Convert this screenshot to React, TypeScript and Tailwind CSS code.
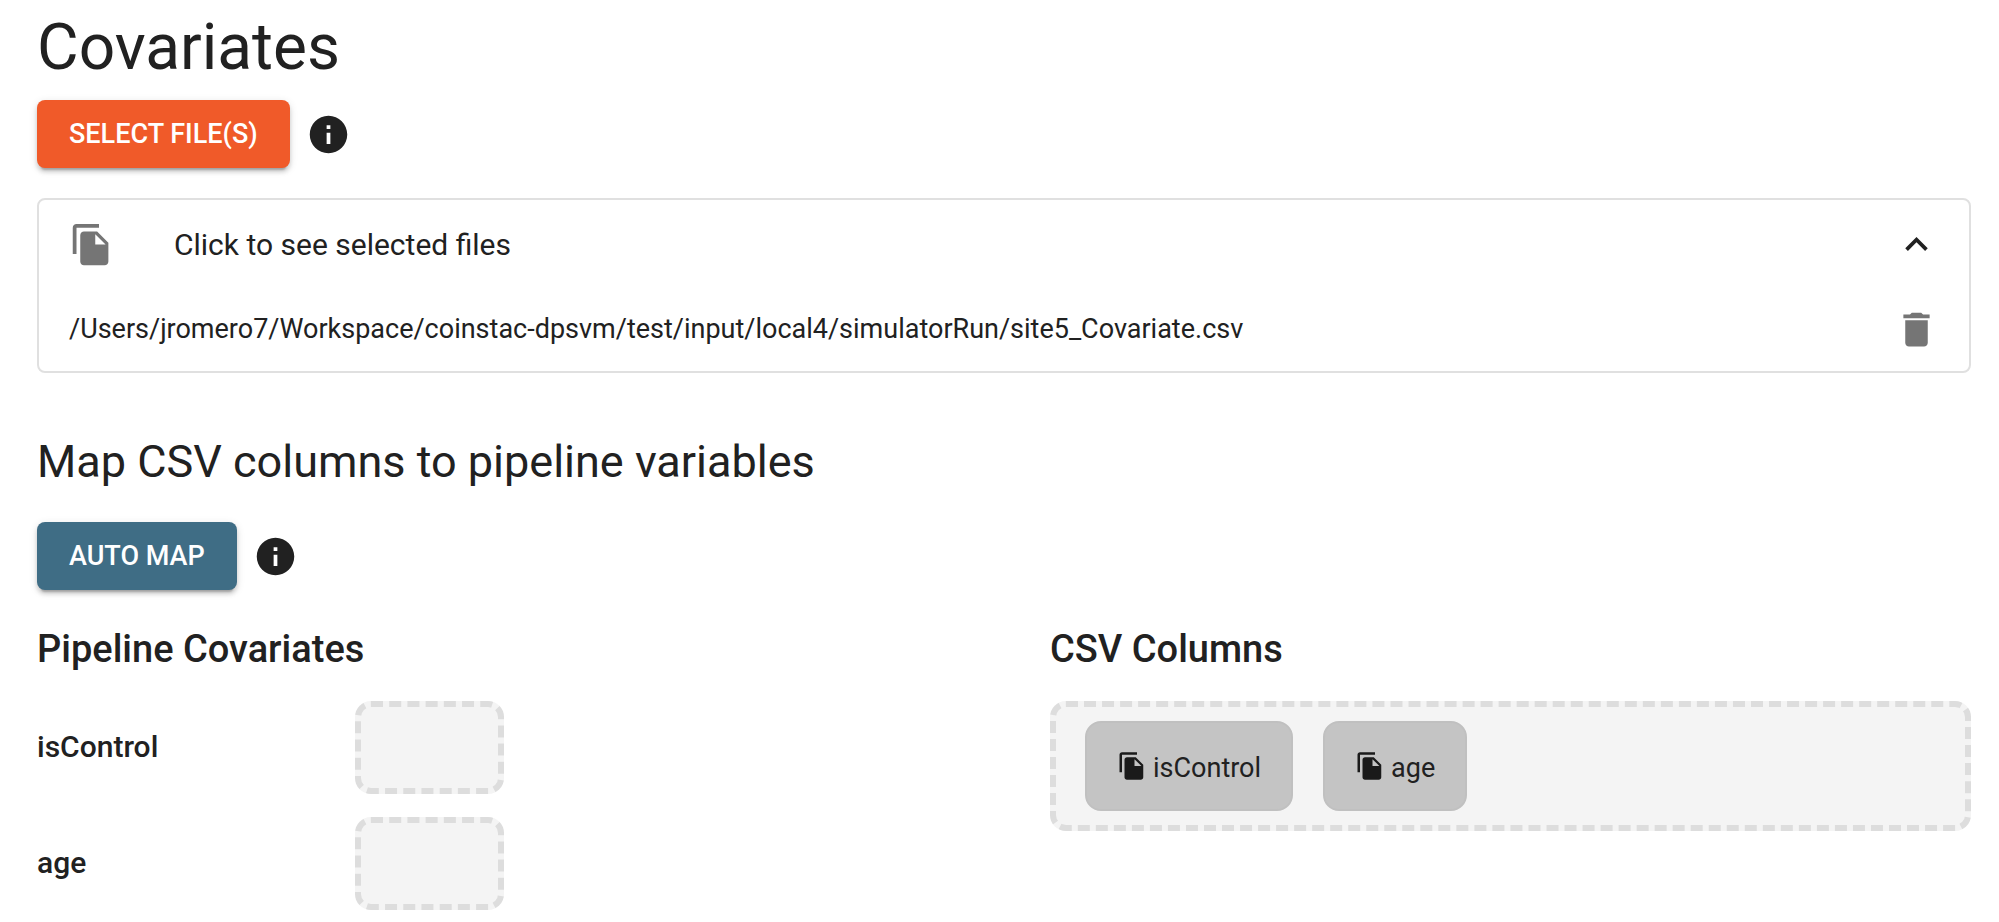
import { useState } from 'react';

const paths = {
  info: 'M12 2C6.48 2 2 6.48 2 12s4.48 10 10 10 10-4.48 10-10S17.52 2 12 2zm1 15h-2v-6h2v6zm0-8h-2V7h2v2z',
  files:
    'M16 1H4c-1.1 0-2 .9-2 2v14h2V3h12V1zm-1 4l6 6v10c0 1.1-.9 2-2 2H7.99C6.89 23 6 22.1 6 21V7c0-1.1.89-2 1.99-2H15zm-1 7h5.5L14 6.5V12z',
  chevron: 'M12 8l-6 6 1.41 1.41L12 10.83l4.59 4.58L18 14z',
  trash: 'M6 19c0 1.1.9 2 2 2h8c1.1 0 2-.9 2-2V7H6v12zM19 4h-3.5l-1-1h-5l-1 1H5v2h14V4z',
};

function Icon({ name, className }: { name: keyof typeof paths; className: string }) {
  return (
    <svg viewBox="0 0 24 24" fill="currentColor" aria-hidden="true" className={`shrink-0 ${className}`}>
      <path d={paths[name]} />
    </svg>
  );
}

const raised =
  'h-[68px] rounded-lg px-8 text-[27px] leading-[46px] font-medium text-white uppercase shadow-[0_6px_2px_-4px_rgba(0,0,0,0.2),0_4px_4px_0_rgba(0,0,0,0.14),0_2px_9px_0_rgba(0,0,0,0.12)]';

function InfoButton({ label }: { label: string }) {
  return (
    <button type="button" aria-label={label} className="rounded-full">
      <Icon name="info" className="size-[45px]" />
    </button>
  );
}

const covariates = ['isControl', 'age'];
const initialFiles = [
  '/Users/jromero7/Workspace/coinstac-dpsvm/test/input/local4/simulatorRun/site5_Covariate.csv',
];

export default function App() {
  const [open, setOpen] = useState(true);
  const [files, setFiles] = useState(initialFiles);

  return (
    <main className="bg-white pt-2 pr-7 pl-[37px] font-['Roboto',sans-serif] text-[#212121]">
      <h1 className="mb-3 text-[64px] leading-[80px]">Covariates</h1>
      <div className="flex items-center gap-4">
        <button type="button" className={`${raised} bg-[#f05a29]`}>
          Select File(s)
        </button>
        <InfoButton label="About covariate files" />
      </div>

      <section className="mt-[30px] rounded-lg border-2 border-[#e0e0e0]">
        <button
          type="button"
          aria-expanded={open}
          onClick={() => setOpen(!open)}
          className="flex h-[88px] w-full items-center px-[30px] text-left text-[30px] leading-[45px]"
        >
          <Icon name="files" className="size-[45px] text-[#757575]" />
          <span className="ml-[60px] flex-1">Click to see selected files</span>
          <Icon name="chevron" className={open ? 'size-[45px]' : 'size-[45px] rotate-180'} />
        </button>
        {open && (
          <ul>
            {files.map((file) => (
              <li key={file} className="flex h-[83px] items-center justify-between px-[30px] text-[27px] leading-[37px]">
                <span>{file}</span>
                <button
                  type="button"
                  aria-label="Remove file"
                  onClick={() => setFiles(files.filter((f) => f !== file))}
                  className="text-[#757575]"
                >
                  <Icon name="trash" className="size-[45px]" />
                </button>
              </li>
            ))}
          </ul>
        )}
      </section>

      <h2 className="mt-[61px] mb-8 text-[45px] leading-[56px]">Map CSV columns to pipeline variables</h2>
      <div className="flex items-center gap-4">
        <button type="button" className={`${raised} bg-[#3f6d85]`}>
          Auto Map
        </button>
        <InfoButton label="About auto mapping" />
      </div>

      <div className="mt-[29px] grid grid-cols-2 gap-[92px]">
        <section>
          <h3 className="mb-[22px] text-[38px] leading-[60px] font-medium">Pipeline Covariates</h3>
          <ul className="flex flex-col gap-[23px]">
            {covariates.map((name) => (
              <li key={name} className="flex items-center text-[30px] leading-[45px] font-medium">
                <span className="w-[318px] pb-0.5">{name}</span>
                <div className="h-[93px] w-[149px] rounded-2xl border-6 border-dashed border-[#dddddd] bg-[#f4f4f4]" />
              </li>
            ))}
          </ul>
        </section>
        <section>
          <h3 className="mb-[22px] text-[38px] leading-[60px] font-medium">CSV Columns</h3>
          <ul className="flex flex-wrap gap-[30px] rounded-2xl border-6 border-dashed border-[#dddddd] bg-[#f4f4f4] px-[29px] py-[14px]">
            {covariates.map((name) => (
              <li
                key={name}
                draggable
                className="flex h-[90px] cursor-grab items-center gap-1.5 rounded-2xl border-2 border-[#c0c0c0] bg-[#c4c4c4] px-[30px] text-[27px] leading-8"
              >
                <Icon name="files" className="size-[30px] text-[#1a1a1a]" />
                <span className="pt-1">{name}</span>
              </li>
            ))}
          </ul>
        </section>
      </div>
    </main>
  );
}
